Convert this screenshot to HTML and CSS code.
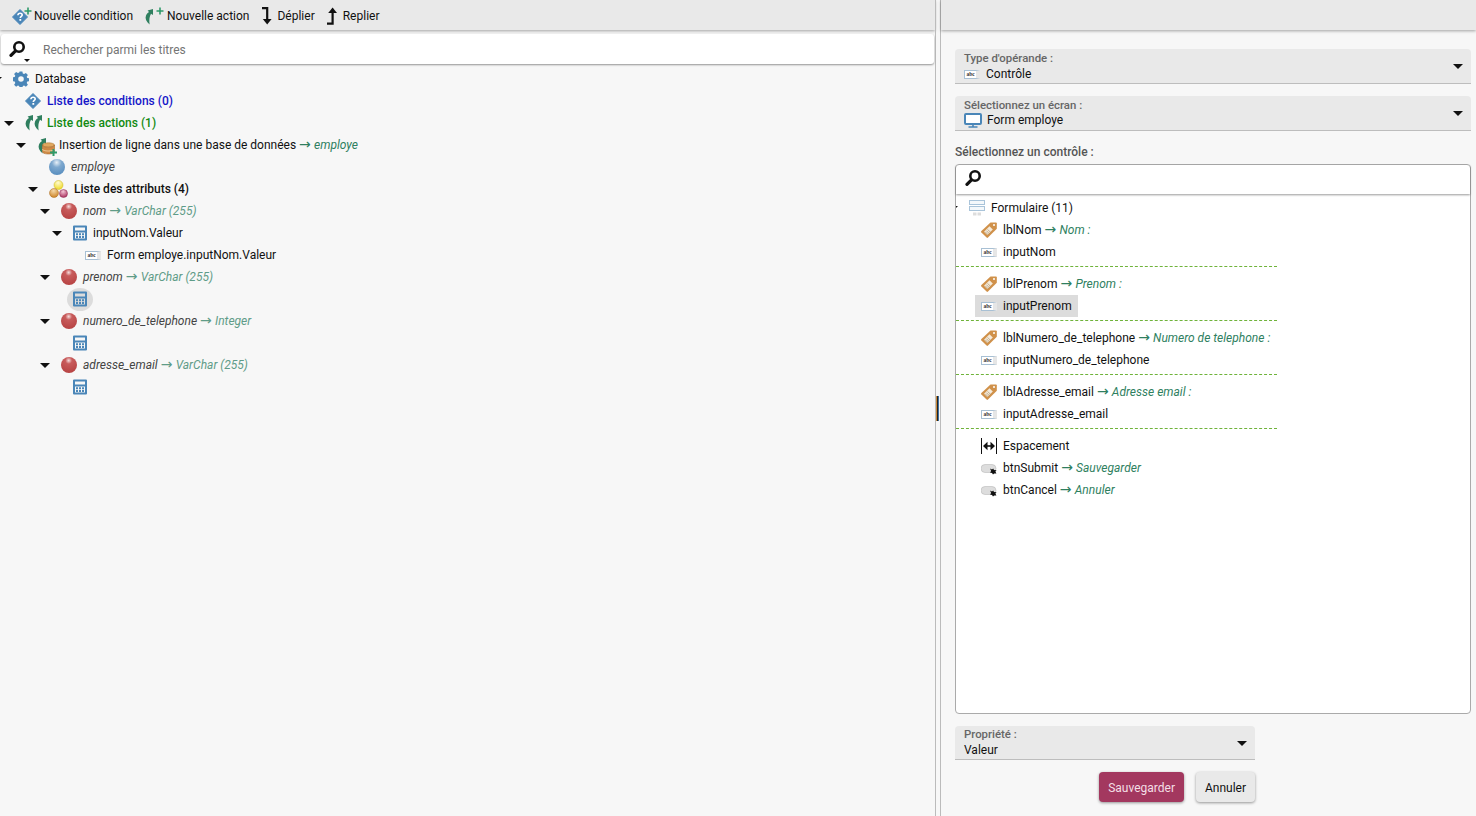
FILE: index.html

```html
<!DOCTYPE html>
<html lang="fr">
<head>
    <meta charset="UTF-8">
    <meta name="viewport" content="width=device-width, initial-scale=1.0">
    <title>Opérande</title>
    <link rel="stylesheet" href="styles.css">
</head>
<body>
    <!-- Icones reutilisees dans les deux arbres -->
    <svg class="sprites" aria-hidden="true">
        <defs>
            <radialGradient id="grad-red" cx="48%" cy="22%" r="75%">
                <stop offset="0" stop-color="#f6dede"/>
                <stop offset="0.28" stop-color="#c85c5c"/>
                <stop offset="1" stop-color="#b84444"/>
            </radialGradient>
            <radialGradient id="grad-blue" cx="48%" cy="22%" r="75%">
                <stop offset="0" stop-color="#e6eff7"/>
                <stop offset="0.4" stop-color="#7fa9cf"/>
                <stop offset="1" stop-color="#5a8fc0"/>
            </radialGradient>
            <radialGradient id="grad-yellow" cx="45%" cy="25%" r="70%">
                <stop offset="0" stop-color="#fffbd0"/>
                <stop offset="1" stop-color="#f0dc30"/>
            </radialGradient>
            <radialGradient id="grad-orange" cx="45%" cy="25%" r="70%">
                <stop offset="0" stop-color="#f5d9a8"/>
                <stop offset="1" stop-color="#d08a30"/>
            </radialGradient>
            <radialGradient id="grad-pink" cx="45%" cy="25%" r="70%">
                <stop offset="0" stop-color="#f3c5d5"/>
                <stop offset="1" stop-color="#b03a66"/>
            </radialGradient>
        </defs>
        <symbol id="i-question" viewBox="0 0 16 16">
            <path d="M8 0.5 15.5 8 8 15.5 0.5 8Z" fill="#4a86b8" stroke="#4a86b8" stroke-linejoin="round"/>
            <path d="M5.9 6.3C6 4.9 6.9 4.2 8.1 4.2 9.4 4.2 10.2 5 10.2 6 10.2 7.4 8.3 7.5 8.3 9" fill="none" stroke="#fff" stroke-width="1.6"/>
            <rect x="7.4" y="10" width="1.8" height="1.8" fill="#fff"/>
        </symbol>
        <symbol id="i-leaf" viewBox="0 0 9 16">
            <path d="M9 0V6L7 4.8C5.4 7.6 5 11 5.6 15.5 2.2 12.6 0.8 9.6 2 6.6 2.6 5 3.6 3.8 5 3L3.6 1.4Z" fill="#2f7f5f"/>
        </symbol>
        <symbol id="i-gear" viewBox="0 0 16 16">
            <path fill-rule="evenodd" fill="#4a86b8" d="M6.6 0.4h2.8l.4 2.1 1.3.6 1.8-1.2 2 2-1.2 1.8.6 1.3 2.1.4v2.8l-2.1.4-.6 1.3 1.2 1.8-2 2-1.8-1.2-1.3.6-.4 2.1H6.6l-.4-2.1-1.3-.6-1.8 1.2-2-2 1.2-1.8-.6-1.3-2.1-.4V6.4l2.1-.4.6-1.3L1.1 2.9l2-2 1.8 1.2 1.3-.6ZM8 5.2a2.8 2.8 0 1 0 0 5.6 2.8 2.8 0 0 0 0-5.6Z"/>
        </symbol>
        <symbol id="i-ball-red" viewBox="0 0 16 16">
            <circle cx="8" cy="8" r="8" fill="url(#grad-red)"/>
        </symbol>
        <symbol id="i-ball-blue" viewBox="0 0 16 16">
            <circle cx="8" cy="8" r="8" fill="url(#grad-blue)"/>
        </symbol>
        <symbol id="i-balls" viewBox="0 0 19 18">
            <circle cx="9.5" cy="5" r="4.5" fill="url(#grad-yellow)" stroke="#c8b420" stroke-width="0.5"/>
            <circle cx="5" cy="13" r="4.5" fill="url(#grad-orange)" stroke="#a86c20" stroke-width="0.5"/>
            <circle cx="14.5" cy="13.5" r="4" fill="url(#grad-pink)" stroke="#8a2a50" stroke-width="0.5"/>
        </symbol>
        <symbol id="i-calc" viewBox="0 0 14 16">
            <path fill-rule="evenodd" fill="#4a86b8" d="M1 0.5h12a1 1 0 0 1 1 1v13a1 1 0 0 1-1 1H1a1 1 0 0 1-1-1v-13a1 1 0 0 1 1-1ZM2 2.5v3h10v-3ZM2 7.5v6h10v-6Z"/>
            <path fill="#4a86b8" d="M3 8.2h2v2H3ZM6 8.2h2v2H6ZM9 8.2h2v2H9ZM3 11h2v2H3ZM6 11h2v2H6ZM9 11h2v2H9Z"/>
        </symbol>
        <symbol id="i-tag" viewBox="0 0 16 16">
            <path fill="#d0914a" d="M9.5 0.5H15a.8.8 0 0 1 .8.8v5.4L7 15.6a1 1 0 0 1-1.4 0L.4 10.4a1 1 0 0 1 0-1.4Z"/>
            <path fill="#f5ead9" d="M8.5 4.3 11.8 7.6 6.3 13.1 3 9.8Z"/>
            <path stroke="#a8906c" stroke-width="0.7" d="M6.6 7.4l3 3M5.4 8.7l3 3M4.2 9.8l3 3"/>
            <circle cx="13" cy="3" r="1" fill="#fff"/>
        </symbol>
        <symbol id="i-form" viewBox="0 0 16 16">
            <rect x="0.5" y="0.5" width="15" height="4" fill="#f4f8fb" stroke="#a9c4da"/>
            <rect x="0.5" y="6.5" width="15" height="4" fill="#f4f8fb" stroke="#a9c4da"/>
            <rect x="4" y="12.5" width="3.5" height="3" fill="#ddd"/>
            <rect x="8.5" y="12.5" width="3.5" height="3" fill="#ddd"/>
        </symbol>
        <symbol id="i-space" viewBox="0 0 16 16">
            <path stroke="#111" stroke-width="1" d="M0.5 0V16M15.5 0V16"/>
            <path stroke="#111" stroke-width="1.6" d="M4 8H12"/>
            <path fill="#111" d="M2 8 6.5 3.8V12.2ZM14 8 9.5 3.8V12.2Z"/>
        </symbol>
        <symbol id="i-button" viewBox="0 0 16 11">
            <rect x="0" y="0.5" width="15" height="8" rx="4" fill="#ddd" stroke="#bbb" stroke-width="0.6"/>
            <path fill="#111" d="M9 4.5 11 5.6 12.2 4.6 13 6 15.6 6.2 14.4 7.6 15.4 9.6 13.2 9.4 12 10.6 11 9 9 8.6 10.2 7Z"/>
        </symbol>
        <symbol id="i-search" viewBox="0 0 16 16">
            <path fill="none" stroke="#111" stroke-width="2.6" d="M10 1.3a4.7 4.7 0 1 1 0 9.4 4.7 4.7 0 0 1 0-9.4Z"/>
            <path stroke="#111" stroke-width="3.2" stroke-linecap="round" d="M6 10.4 2 14.4"/>
        </symbol>
    </svg>

    <main class="pane pane-left">
        <div class="toolbar">
            <button class="tool">
                <svg class="tool-icon icon-22" viewBox="0 0 22 18">
                    <use href="#i-question" x="0" y="2" width="16" height="16"/>
                    <path d="M16 0.5V7.5M12.5 4H19.5" stroke="#2e9a6a" stroke-width="1.6"/>
                </svg>
                Nouvelle condition
            </button>
            <button class="tool">
                <svg class="tool-icon icon-23" viewBox="0 0 23 18">
                    <use href="#i-leaf" x="0" y="2" width="9" height="16"/>
                    <path d="M16 0.5V7.5M12.5 4H19.5" stroke="#2e9a6a" stroke-width="1.6"/>
                </svg>
                Nouvelle action
            </button>
            <button class="tool tool-gap">
                <svg class="tool-icon icon-16" viewBox="0 0 16 18">
                    <path d="M1 1.2H6.2V13" fill="none" stroke="#111" stroke-width="2.2"/>
                    <path d="M1.8 12H10.6L6.2 17.5Z" fill="#111"/>
                </svg>
                Déplier
            </button>
            <button class="tool">
                <svg class="tool-icon icon-17" viewBox="0 0 17 18">
                    <path d="M1 16.6H6.6V5" fill="none" stroke="#111" stroke-width="2.2"/>
                    <path d="M2.2 6H11L6.6 0.5Z" fill="#111"/>
                </svg>
                Replier
            </button>
        </div>

        <div class="search-bar">
            <svg class="search-icon"><use href="#i-search"/></svg>
            <span class="search-caret"></span>
            <span class="search-hint">Rechercher parmi les titres</span>
        </div>

        <div class="tree">
            <ul class="tree-root">
                <li>
                    <div class="node"><span class="toggle"></span><svg class="ico"><use href="#i-gear"/></svg><span class="label">Database</span></div>
                    <ul>
                        <li><div class="node"><span class="toggle empty"></span><svg class="ico"><use href="#i-question"/></svg><span class="label txt-blue">Liste des conditions (0)</span></div></li>
                        <li>
                            <div class="node"><span class="toggle"></span>
                                <svg class="ico ico-18" viewBox="0 0 18 16"><use href="#i-leaf" x="-1" y="0" width="9" height="16"/><use href="#i-leaf" x="8" y="0" width="9" height="16"/></svg>
                                <span class="label txt-green">Liste des actions (1)</span></div>
                            <ul>
                                <li>
                                    <div class="node"><span class="toggle"></span>
                                        <svg class="ico ico-db" viewBox="0 0 20 20">
                                            <use href="#i-leaf" x="0" y="3" width="9" height="16"/>
                                            <ellipse cx="11.5" cy="10" rx="6" ry="2.2" fill="#e0a860" stroke="#b07830" stroke-width="0.6"/>
                                            <path d="M5.5 10V16.8C5.5 18.2 8.5 19 11.5 19S17.5 18.2 17.5 16.8V10C17.5 11.4 14.5 12.2 11.5 12.2S5.5 11.4 5.5 10Z" fill="#cf8a45" stroke="#a86c30" stroke-width="0.6"/>
                                            <path d="M5.5 14C5.5 15.4 8.5 16 11.5 16S17.5 15.4 17.5 14" fill="none" stroke="#f0d0a0"/>
                                            <path d="M16.5 14V21M13 17.5H20" stroke="#2e9a6a" stroke-width="2"/>
                                        </svg>
                                        <span class="label">Insertion de ligne dans une base de données <em class="txt-detail"><span class="arrow">→</span> employe</em></span></div>
                                    <ul>
                                        <li><div class="node"><span class="toggle empty"></span><svg class="ico"><use href="#i-ball-blue"/></svg><span class="label txt-item">employe</span></div></li>
                                        <li>
                                            <div class="node"><span class="toggle"></span><svg class="ico ico-balls"><use href="#i-balls"/></svg><span class="label txt-strong">Liste des attributs (4)</span></div>
                                            <ul>
                                                <li>
                                                    <div class="node"><span class="toggle"></span><svg class="ico"><use href="#i-ball-red"/></svg><span class="label txt-item">nom <span class="txt-type"><span class="arrow">→</span> VarChar (255)</span></span></div>
                                                    <ul>
                                                        <li>
                                                            <div class="node"><span class="toggle"></span><svg class="ico ico-calc"><use href="#i-calc"/></svg><span class="label">inputNom.Valeur</span></div>
                                                            <ul>
                                                                <li><div class="node"><span class="toggle empty"></span><span class="ico-abc">abc</span><span class="label">Form employe.inputNom.Valeur</span></div></li>
                                                            </ul>
                                                        </li>
                                                    </ul>
                                                </li>
                                                <li>
                                                    <div class="node"><span class="toggle"></span><svg class="ico"><use href="#i-ball-red"/></svg><span class="label txt-item">prenom <span class="txt-type"><span class="arrow">→</span> VarChar (255)</span></span></div>
                                                    <ul>
                                                        <li><div class="node"><span class="toggle empty"></span><span class="calc-selected"><svg class="ico ico-calc"><use href="#i-calc"/></svg></span></div></li>
                                                    </ul>
                                                </li>
                                                <li>
                                                    <div class="node"><span class="toggle"></span><svg class="ico"><use href="#i-ball-red"/></svg><span class="label txt-item">numero_de_telephone <span class="txt-type"><span class="arrow">→</span> Integer</span></span></div>
                                                    <ul>
                                                        <li><div class="node"><span class="toggle empty"></span><svg class="ico ico-calc"><use href="#i-calc"/></svg></div></li>
                                                    </ul>
                                                </li>
                                                <li>
                                                    <div class="node"><span class="toggle"></span><svg class="ico"><use href="#i-ball-red"/></svg><span class="label txt-item">adresse_email <span class="txt-type"><span class="arrow">→</span> VarChar (255)</span></span></div>
                                                    <ul>
                                                        <li><div class="node"><span class="toggle empty"></span><svg class="ico ico-calc"><use href="#i-calc"/></svg></div></li>
                                                    </ul>
                                                </li>
                                            </ul>
                                        </li>
                                    </ul>
                                </li>
                            </ul>
                        </li>
                    </ul>
                </li>
            </ul>
        </div>
    </main>

    <div class="splitter"><span class="splitter-grip"></span></div>

    <aside class="pane pane-right">
        <div class="toolbar"></div>
        <div class="form">
            <div class="field">
                <div class="field-title">Type d'opérande :</div>
                <div class="field-value"><span class="ico-abc">abc</span><span class="field-text">Contrôle</span></div>
                <span class="caret"></span>
            </div>
            <div class="field">
                <div class="field-title">Sélectionnez un écran :</div>
                <div class="field-value field-value-screen">
                    <svg class="ico-screen" viewBox="0 0 18 15">
                        <rect x="1" y="1" width="16" height="10" rx="1" fill="#fff" stroke="#4a86b8" stroke-width="2"/>
                        <path d="M9 11V14M4.5 14H13.5" stroke="#4a86b8" stroke-width="1.6"/>
                    </svg>Form employe
                </div>
                <span class="caret"></span>
            </div>

            <div class="section-title">Sélectionnez un contrôle :</div>
            <div class="control-box">
                <div class="control-search"><svg class="search-icon"><use href="#i-search"/></svg></div>
                <div class="tree tree-controls">
                    <ul class="tree-root">
                        <li>
                            <div class="node"><span class="toggle"></span><svg class="ico"><use href="#i-form"/></svg><span class="label">Formulaire (11)</span></div>
                            <ul>
                                <li><div class="node"><span class="toggle empty"></span><svg class="ico"><use href="#i-tag"/></svg><span class="label">lblNom <em class="txt-detail"><span class="arrow">→</span> Nom :</em></span></div></li>
                                <li><div class="node"><span class="toggle empty"></span><span class="ico-abc">abc</span><span class="label">inputNom</span></div></li>
                                <li class="divider"></li>
                                <li><div class="node"><span class="toggle empty"></span><svg class="ico"><use href="#i-tag"/></svg><span class="label">lblPrenom <em class="txt-detail"><span class="arrow">→</span> Prenom :</em></span></div></li>
                                <li><div class="node"><span class="toggle empty"></span><span class="selected"><span class="ico-abc">abc</span><span class="label">inputPrenom</span></span></div></li>
                                <li class="divider"></li>
                                <li><div class="node"><span class="toggle empty"></span><svg class="ico"><use href="#i-tag"/></svg><span class="label">lblNumero_de_telephone <em class="txt-detail"><span class="arrow">→</span> Numero de telephone :</em></span></div></li>
                                <li><div class="node"><span class="toggle empty"></span><span class="ico-abc">abc</span><span class="label">inputNumero_de_telephone</span></div></li>
                                <li class="divider"></li>
                                <li><div class="node"><span class="toggle empty"></span><svg class="ico"><use href="#i-tag"/></svg><span class="label">lblAdresse_email <em class="txt-detail"><span class="arrow">→</span> Adresse email :</em></span></div></li>
                                <li><div class="node"><span class="toggle empty"></span><span class="ico-abc">abc</span><span class="label">inputAdresse_email</span></div></li>
                                <li class="divider"></li>
                                <li><div class="node"><span class="toggle empty"></span><svg class="ico"><use href="#i-space"/></svg><span class="label">Espacement</span></div></li>
                                <li><div class="node"><span class="toggle empty"></span><svg class="ico"><use href="#i-button" y="4" height="11"/></svg><span class="label">btnSubmit <em class="txt-detail"><span class="arrow">→</span> Sauvegarder</em></span></div></li>
                                <li><div class="node"><span class="toggle empty"></span><svg class="ico"><use href="#i-button" y="4" height="11"/></svg><span class="label">btnCancel <em class="txt-detail"><span class="arrow">→</span> Annuler</em></span></div></li>
                            </ul>
                        </li>
                    </ul>
                </div>
            </div>

            <div class="field field-small">
                <div class="field-title">Propriété :</div>
                <div class="field-value">Valeur</div>
                <span class="caret"></span>
            </div>
            <div class="actions">
                <button class="btn btn-save">Sauvegarder</button>
                <button class="btn">Annuler</button>
            </div>
        </div>
    </aside>
</body>
</html>
```

FILE: styles.css

```css
* {
    box-sizing: border-box;
}
html, body {
    height: 100%;
}
body {
    display: flex;
    margin: 0;
    overflow: hidden;
    font-family: Roboto, "DejaVu Sans", sans-serif;
    font-size: 12px;
    color: #111;
    background-color: #f7f7f7;
}
ul {
    list-style: none;
    margin: 0;
    padding: 0;
}
.sprites {
    position: absolute;
    width: 0;
    height: 0;
}

.pane {
    display: flex;
    flex-direction: column;
    min-width: 0;
}
.pane-left {
    width: 935px;
}
.pane-right {
    flex: 1;
}
.splitter {
    display: flex;
    align-items: center;
    width: 6px;
    height: 100%;
    border-left: 1px solid #bbb;
    border-right: 1px solid #bbb;
}
.splitter-grip {
    width: 3px;
    height: 25px;
    background: linear-gradient(to right, #c98a3c 0, #c98a3c 33%, #222 33%, #222 66%, #3d6f9e 66%);
}

.toolbar {
    flex: none;
    display: flex;
    align-items: center;
    gap: 11px;
    height: 30px;
    padding: 2px 0 0 12px;
    background-color: #e9e9e9;
    box-shadow: 0 1px 3px rgba(0, 0, 0, 0.35);
}
.tool {
    display: flex;
    align-items: center;
    padding: 0;
    border: none;
    background: none;
    font: inherit;
    color: #111;
    cursor: pointer;
}
.tool-gap {
    margin-left: 1px;
}
.tool-icon {
    height: 18px;
}
.icon-22 { width: 22px; }
.icon-23 { width: 23px; }
.icon-16 { width: 16px; }
.icon-17 { width: 17px; }

.search-bar {
    flex: none;
    position: relative;
    display: flex;
    align-items: center;
    height: 30px;
    margin: 4px 1px;
    padding-left: 8px;
    border-radius: 3px;
    background-color: white;
    box-shadow: 0 1px 2px rgba(0, 0, 0, 0.4);
}
.search-icon {
    display: block;
    width: 16px;
    height: 16px;
}
.search-caret {
    position: absolute;
    left: 23px;
    top: 25px;
    border-left: 3px solid transparent;
    border-right: 3px solid transparent;
    border-top: 3px solid #111;
}
.search-hint {
    margin: 2px 0 0 18px;
    color: #757575;
}

.tree {
    overflow: hidden;
}
.tree-root {
    margin-left: -11px;
}
.tree ul ul {
    padding-left: 12px;
}
.node {
    display: flex;
    align-items: center;
    height: 22px;
    white-space: nowrap;
}
.toggle {
    flex: none;
    display: flex;
    justify-content: center;
    width: 16px;
    margin-right: 8px;
}
.toggle::before {
    content: "";
    border-top: 5px solid #111;
    border-left: 5px solid transparent;
    border-right: 5px solid transparent;
}
.toggle.empty::before {
    display: none;
}
.ico {
    flex: none;
    width: 16px;
    height: 16px;
    overflow: visible;
}
.ico-18 {
    width: 18px;
    margin-right: -2px;
}
.ico-db {
    width: 20px;
    height: 20px;
    margin-right: -4px;
}
.ico-balls {
    width: 19px;
    height: 18px;
}
.ico-calc {
    width: 14px;
}
.ico-abc {
    flex: none;
    width: 16px;
    height: 9px;
    border: 1px solid #a8c0d4;
    border-right: 4px solid #e6e6e6;
    background-color: white;
    font-family: "Liberation Serif", serif;
    font-size: 5.5px;
    font-weight: bold;
    line-height: 7px;
    text-align: center;
    color: #333;
}
.label {
    margin-left: 6px;
}
.arrow {
    display: inline;
    font-family: "DejaVu Sans", sans-serif;
    font-size: 14px;
    font-style: normal;
    line-height: 10px;
    letter-spacing: 0.3px;
}
.txt-blue {
    color: #1414c8;
    font-weight: 500;
}
.txt-green {
    color: #128a12;
    font-weight: 500;
}
.txt-strong {
    font-weight: 500;
}
.txt-item {
    color: #444;
    font-style: italic;
}
.txt-detail {
    color: #2f7f5f;
    font-style: italic;
}
.txt-type {
    color: #5f9c88;
}
.calc-selected {
    display: flex;
    align-items: center;
    justify-content: center;
    width: 26px;
    height: 23px;
    margin-left: -6px;
    border-radius: 50%;
    background-color: #dcdcdc;
}
.selected {
    display: flex;
    align-items: center;
    height: 22px;
    margin-left: -6px;
    padding: 0 6px;
    background-color: #dcdcdc;
}

.form {
    flex: 1;
    display: flex;
    flex-direction: column;
    padding: 19px 5px 0 14px;
}
.field {
    position: relative;
    flex: none;
    height: 35px;
    margin-bottom: 12px;
    padding: 3px 9px 0;
    border-bottom: 1px solid #bdbdbd;
    border-radius: 4px 4px 0 0;
    background-color: #e9e9e9;
}
.field-small {
    width: 300px;
    height: 34px;
    margin: 12px 0;
    padding-top: 2px;
}
.field-title {
    font-size: 11.4px;
    font-weight: 500;
    line-height: 13px;
    color: #666;
}
.field-value {
    display: flex;
    align-items: center;
    height: 16px;
    margin-top: 1px;
}
.field-value-screen {
    margin-top: 0;
}
.field-text {
    margin-left: 6px;
}
.ico-screen {
    width: 18px;
    height: 15px;
    margin-right: 5px;
}
.caret {
    position: absolute;
    right: 8px;
    top: 15px;
    border-top: 5px solid #111;
    border-left: 5px solid transparent;
    border-right: 5px solid transparent;
}
.section-title {
    height: 21px;
    padding-top: 1px;
    font-weight: 500;
    color: #555;
    line-height: 16px;
}
.control-box {
    flex: none;
    display: flex;
    flex-direction: column;
    height: 550px;
    border: 1px solid #aaa;
    border-radius: 4px;
    background-color: white;
}
.control-search {
    flex: none;
    display: flex;
    align-items: center;
    height: 29px;
    padding: 0 0 3px 9px;
    box-shadow: 0 1px 2px rgba(0, 0, 0, 0.4);
}
.tree-controls {
    padding-top: 3px;
}
.divider {
    width: 321px;
    height: 10px;
    margin-left: -1px;
    padding-top: 3px;
}
.divider::before {
    content: "";
    display: block;
    border-top: 1px dashed #6fb33a;
}
.actions {
    width: 300px;
    display: flex;
    justify-content: flex-end;
    gap: 12px;
}
.btn {
    height: 30px;
    padding: 2px 9px 0;
    border: none;
    border-radius: 4px;
    font: inherit;
    color: #111;
    background-color: #e9e9e9;
    box-shadow: 0 1px 3px rgba(0, 0, 0, 0.4);
    cursor: pointer;
}
.btn-save {
    color: #f3dfe6;
    background-color: #a3385f;
}
```
